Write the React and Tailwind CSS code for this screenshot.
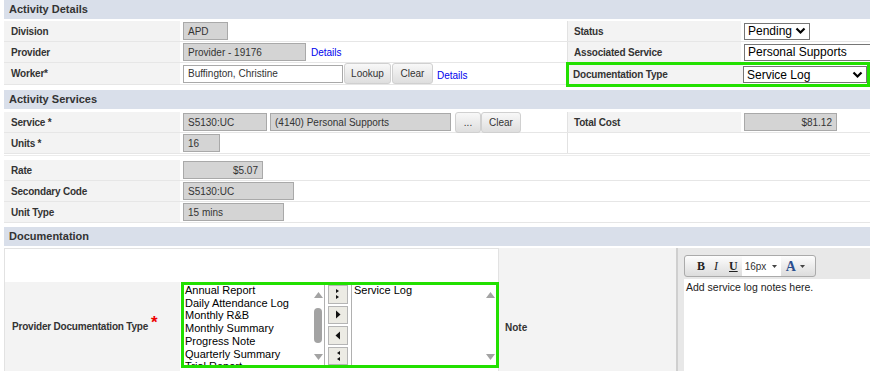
import React from 'react';

const font = { fontFamily: '"Liberation Sans", Arial, sans-serif' };
const serif = { fontFamily: '"Liberation Serif", serif' };

const SectionHeader = ({ title }) => (
    <div className="h-[19px] bg-[#d9dfea] flex items-center pl-[5px] text-[11px] font-bold text-[#333]">{title}</div>
);

const ReadInput = ({ w, children, right }) => (
    <div className={`h-[18px] bg-[#d4d4d4] border border-[#a9a9a9] text-[10px] text-[#333] px-[4px] flex items-center ${right ? 'justify-end' : ''} ${w}`}>
        {children}
    </div>
);

const Btn = ({ children, w }) => (
    <div className={`h-[21px] ${w} rounded-[3px] border border-[#d0d0d0] bg-gradient-to-b from-[#f8f8f8] to-[#dedede] text-[10px] text-[#333] flex items-center justify-center`}>
        {children}
    </div>
);

const Chevron = () => (
    <svg width="11" height="8" viewBox="0 0 11 8"><path d="M1.5 1.5 L5.5 5.5 L9.5 1.5" stroke="#000" strokeWidth="2.2" fill="none" /></svg>
);

const Select = ({ w, children, noChevron }) => (
    <div className={`h-[17px] bg-white border border-[#767676] text-[12px] text-black pl-[3px] pr-[3px] flex items-center justify-between ${w}`}>
        <span className="whitespace-nowrap">{children}</span>
        {!noChevron && <Chevron />}
    </div>
);

const Label = ({ children, w = 'w-[176px]', pl = 'pl-[7px]' }) => (
    <div className={`${w} ${pl} shrink-0 bg-[#f3f3f3] flex items-center text-[10px] tracking-[-0.2px] font-bold text-[#333]`}>{children}</div>
);

const Row = ({ label, children, rightLabel, right, split = true, gap = 'gap-[4px]' }) => (
    <div className="flex h-[21px] border-b border-[#e6e6e6]">
        <Label>{label}</Label>
        <div className={`${split ? 'w-[387px]' : 'flex-1'} shrink-0 flex items-center ${gap} pl-[3px]`}>{children}</div>
        {split && (
            <div className="flex flex-1 border-l border-[#e2e2e2]">
                {rightLabel ? <Label w="w-[173px]" pl="pl-[6px]">{rightLabel}</Label> : <div className="w-[173px]" />}
                <div className="flex-1 flex items-center pl-[3px]">{right}</div>
            </div>
        )}
    </div>
);

const Link = ({ children }) => <span className="text-[10px] text-[#0000ee] ml-[1px]">{children}</span>;

const ScrollArrow = ({ up }) => (
    <svg width="9" height="6" viewBox="0 0 9 6"><path d={up ? 'M0 6 L4.5 0 L9 6 Z' : 'M0 0 L4.5 6 L9 0 Z'} fill="#a3a3a3" /></svg>
);

const MoveBtn = ({ dir, dbl }) => (
    <div className="w-[20px] h-[19px] bg-[#ecebe4] border border-[#b5b5b5] flex items-center justify-center">
        {dbl ? (
            <svg width="6" height="12" viewBox="0 0 6 12">
                {dir === 'r'
                    ? <><path d="M1 1 L4 3 L1 5 Z" fill="#111" /><path d="M1 7 L4 9 L1 11 Z" fill="#111" /></>
                    : <><path d="M5 1 L2 3 L5 5 Z" fill="#111" /><path d="M5 7 L2 9 L5 11 Z" fill="#111" /></>}
            </svg>
        ) : (
            <svg width="6" height="9" viewBox="0 0 6 9">
                <path d={dir === 'r' ? 'M1 0.5 L5.5 4.5 L1 8.5 Z' : 'M5 0.5 L0.5 4.5 L5 8.5 Z'} fill="#111" />
            </svg>
        )}
    </div>
);

const docTypes = ['Annual Report', 'Daily Attendance Log', 'Monthly R&B', 'Monthly Summary', 'Progress Note', 'Quarterly Summary', 'Trial Report'];

const App = () => {
    return (
        <div className="w-[870px] h-[371px] overflow-hidden bg-white pl-[4px]" style={font}>
            <SectionHeader title="Activity Details" />
            <div className="pt-[2px]">
                <Row label="Division" rightLabel="Status" right={<Select w="w-[66px]">Pending</Select>}>
                    <ReadInput w="w-[45px]">APD</ReadInput>
                </Row>
                <Row label="Provider" rightLabel="Associated Service" right={<Select w="w-[140px]" noChevron>Personal Supports</Select>}>
                    <ReadInput w="w-[123px]">Provider - 19176</ReadInput>
                    <Link>Details</Link>
                </Row>
                <div className="flex h-[22px] border-b border-[#e6e6e6]">
                    <Label>Worker*</Label>
                    <div className="w-[387px] shrink-0 flex items-center pl-[3px]">
                        <div className="h-[18px] w-[160px] bg-white border border-[#a9a9a9] text-[10px] text-[#333] px-[4px] flex items-center">Buffington, Christine</div>
                        <div className="ml-[1px]"><Btn w="w-[47px]">Lookup</Btn></div>
                        <div className="ml-[1px]"><Btn w="w-[41px]">Clear</Btn></div>
                        <span className="ml-[3px]"><Link>Details</Link></span>
                    </div>
                    <div className="flex-1 flex border-[3px] border-[#22e000] -mt-[1px] -mb-[3px] -ml-[1px] mr-[2px]">
                        <Label w="w-[174px]" pl="pl-[4px]">Documentation Type</Label>
                        <div className="flex-1 flex items-center">
                            <Select w="w-[124px]">Service Log</Select>
                        </div>
                    </div>
                </div>
            </div>

            <div className="mt-[5px]">
                <SectionHeader title="Activity Services" />
            </div>
            <div className="pt-[3px]">
                <Row label="Service *" gap="gap-[3px]" rightLabel="Total Cost" right={<ReadInput w="w-[93px]" right>$81.12</ReadInput>}>
                    <ReadInput w="w-[84px]">S5130:UC</ReadInput>
                    <ReadInput w="w-[181px]">(4140) Personal Supports</ReadInput>
                    <div className="flex ml-[1px]">
                        <Btn w="w-[26px]">...</Btn>
                        <Btn w="w-[40px]">Clear</Btn>
                    </div>
                </Row>
                <Row label="Units *">
                    <ReadInput w="w-[37px]">16</ReadInput>
                </Row>
            </div>
            <div className="pt-[4px] border-t border-[#ececec] mt-[1px]">
                <Row label="Rate" split={false}>
                    <ReadInput w="w-[80px]" right>$5.07</ReadInput>
                </Row>
                <Row label="Secondary Code" split={false}>
                    <ReadInput w="w-[111px]">S5130:UC</ReadInput>
                </Row>
                <Row label="Unit Type" split={false}>
                    <ReadInput w="w-[101px]">15 mins</ReadInput>
                </Row>
            </div>

            <div className="mt-[4px]">
                <SectionHeader title="Documentation" />
            </div>
            <div className="mt-[2px] grid grid-cols-[176px_318px_178px_1fr] grid-rows-[34px_120px]">
                <div className="col-span-2 border-l border-t border-[#e2e2e2] bg-white" />
                <div className="row-span-2 bg-[#f3f3f3] border-l border-[#e2e2e2] pl-[6px] pt-[72px] text-[10px] font-bold text-[#333]">Note</div>
                <div className="row-span-2 bg-[#e8e8e8] border-l-2 border-[#cfcfcf] pl-[6px] pt-[7px] flex flex-col">
                    <div className="w-[132px] h-[22px] rounded-[3px] border border-[#aaa] bg-gradient-to-b from-[#fdfdfd] to-[#dcdcdc] flex items-center pl-[12px]">
                        <span className="text-[12px] font-bold text-[#222]" style={serif}>B</span>
                        <span className="ml-[9px] text-[12px] italic text-[#222]" style={serif}>I</span>
                        <span className="ml-[11px] text-[12px] font-bold underline text-[#222]" style={serif}>U</span>
                        <div className="ml-[4px] h-[20px] w-[39px] bg-white flex items-center pl-[3px] text-[10px] text-[#333]">
                            16px
                            <svg className="ml-[6px]" width="5" height="3" viewBox="0 0 5 3"><path d="M0 0 L5 0 L2.5 3 Z" fill="#444" /></svg>
                        </div>
                        <span className="ml-[5px] text-[14px] font-bold text-[#2c4f8f]" style={serif}>A</span>
                        <svg className="ml-[4px]" width="5" height="3" viewBox="0 0 5 3"><path d="M0 0 L5 0 L2.5 3 Z" fill="#444" /></svg>
                    </div>
                    <div className="mt-[2px] flex-1 bg-white text-[10.5px] text-[#222] pl-[2px] pt-[1px]">Add service log notes here.</div>
                </div>
                <div className="bg-[#f3f3f3] border-l border-[#e2e2e2] pl-[7px] flex items-start pt-[37px] text-[10px] tracking-[-0.2px] font-bold text-[#333]">
                    Provider Documentation Type<span className="text-[#e00] text-[17px] leading-[10px] ml-[3px] -mt-[1px]">*</span>
                </div>
                <div className="pl-[1px]">
                    <div className="w-[318px] h-[86px] border-[3px] border-[#22e000] flex bg-white">
                        <div className="w-[140px] flex">
                            <div className="flex-1 overflow-hidden text-[11px] leading-[12.7px] text-black pl-[1px] -mt-[1px]">
                                {docTypes.map((t) => <div key={t} className="whitespace-nowrap">{t}</div>)}
                            </div>
                            <div className="w-[12px] flex flex-col items-center pt-[7px] pb-[5px]">
                                <ScrollArrow up />
                                <div className="w-[8px] h-[35px] rounded-[4px] bg-[#a3a3a3] mt-[10px]" />
                                <div className="mt-auto"><ScrollArrow /></div>
                            </div>
                        </div>
                        <div className="w-[28px] border-l border-r border-[#b0b0b0] flex flex-col items-center gap-[2px] bg-white">
                            <MoveBtn dir="r" dbl />
                            <MoveBtn dir="r" />
                            <MoveBtn dir="l" />
                            <MoveBtn dir="l" dbl />
                        </div>
                        <div className="flex-1 flex">
                            <div className="flex-1 text-[11px] leading-[12.7px] text-black pl-[2px] -mt-[1px]">Service Log</div>
                            <div className="w-[12px] flex flex-col items-center justify-between pt-[7px] pb-[5px]">
                                <ScrollArrow up />
                                <ScrollArrow />
                            </div>
                        </div>
                    </div>
                </div>
            </div>
        </div>
    );
};

export default App;
